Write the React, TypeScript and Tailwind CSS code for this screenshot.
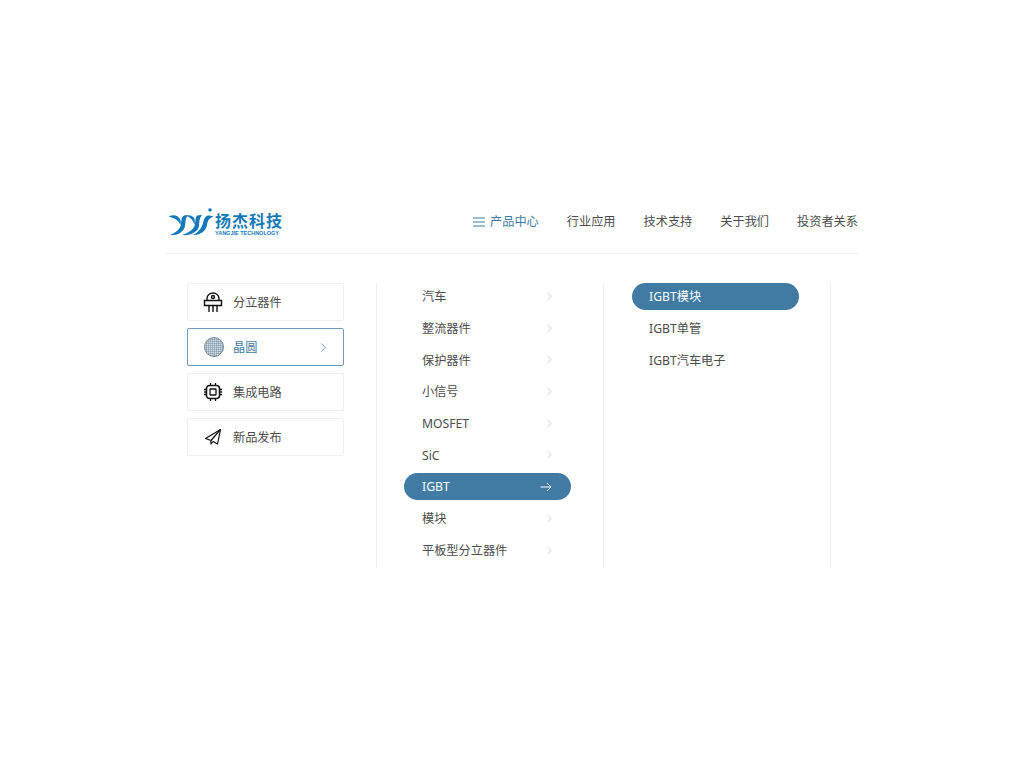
import { ChevronRight } from "lucide-react";

const fontCls = "font-['Noto_Sans','Noto_Sans_CJK_SC',sans-serif]";

const navItems = ["行业应用", "技术支持", "关于我们", "投资者关系"];
const categories = ["汽车", "整流器件", "保护器件", "小信号", "MOSFET", "SiC", "IGBT", "模块", "平板型分立器件"];
const subItems = ["IGBT模块", "IGBT单管", "IGBT汽车电子"];

const Logo = () => (
  <div className="flex items-end">
    <svg width="46" height="30" viewBox="0 0 46 30" className="shrink-0" fill="#1479b8">
      <path d="M0.500 9.500 C5 7 10 8 12 12 C13 14 13 16 12.500 18 C11 14 7 11 0.500 9.500 Z" />
      <path d="M16 8.500 C13.500 10 13.500 13 13 17 C12.500 22 8 25.500 2 28 C9 29 16 25 17 19 C17.800 14 17.500 11 20 8 C18.500 7.800 17 8 16 8.500 Z" />
      <path d="M18 8.800 C21 7.500 25 8.500 26.500 12 C27 14 27 16 26.500 18 C25.500 14 23 10.500 18 8.800 Z" />
      <path d="M29 8.500 C27.500 10 27.500 13 27 17 C26.500 22 21 25.500 14 28 C22 29 30 25 31 19 C31.500 14 31.500 11 34 8 C32.500 7.800 30.500 8 29 8.500 Z" />
      <path d="M45.500 9.500 C40 7 36.500 9 35.500 14 C34.500 20 31 25 25 28 C32 28.500 38 24 39 18 C39.600 14 41 11 45.500 9.500 Z" />
      <circle cx="42" cy="3" r="1.800" />
    </svg>
    <div className="ml-[1px] flex flex-col items-start">
      <span className="pt-[1px] text-[16px] leading-[18px] font-bold tracking-[1px] text-[#1479b8]">扬杰科技</span>
      <span className="whitespace-nowrap font-['Liberation_Sans',sans-serif] text-[5.500px] leading-[7px] font-bold text-[#1479b8]">YANGJIE TECHNOLOGY</span>
    </div>
  </div>
);

const DiodeIcon = () => (
  <svg width="20" height="20" viewBox="0 0 20 20" fill="none" stroke="#111" strokeWidth="1.400">
    <path d="M4 8.500 V6.500 C4 3 7 1 10 1 C13 1 16 3 16 6.500 V8.500" />
    <circle cx="10" cy="5" r="1.500" />
    <path d="M1.500 8.500 H18.500 V13.500 H1.500 Z" />
    <path d="M6 13.500 V20 M10 13.500 V20 M14 13.500 V20" />
  </svg>
);

const WaferIcon = () => (
  <svg width="20" height="20" viewBox="0 0 20 20" className="translate-x-[1px]">
    <defs>
      <pattern id="wafer-grid" width="2" height="2" patternUnits="userSpaceOnUse">
        <rect width="2" height="2" fill="#d5dee6" />
        <path d="M0 0 H2 M0 0 V2" stroke="#4f6e88" strokeWidth="0.700" />
      </pattern>
    </defs>
    <circle cx="10" cy="10" r="9.500" fill="url(#wafer-grid)" stroke="#5b6f82" strokeWidth="0.800" />
  </svg>
);

const ChipIcon = () => (
  <svg width="20" height="20" viewBox="0 0 20 20" fill="none" stroke="#111" strokeWidth="1.300">
    <rect x="3.500" y="3.500" width="13" height="13" rx="3" strokeWidth="1.500" />
    <rect x="7" y="7" width="6" height="6" rx="0.500" />
    <path d="M7.500 1 V3.500 M12.500 1 V3.500 M7.500 16.500 V19 M12.500 16.500 V19 M1 7.500 H3.500 M1 10 H3.500 M1 12.500 H3.500 M16.500 7.500 H19 M16.500 10 H19 M16.500 12.500 H19" />
  </svg>
);

const PlaneIcon = () => (
  <svg width="18" height="18" viewBox="0 0 18 18" fill="none" stroke="#111" strokeWidth="1.200" strokeLinejoin="round">
    <path d="M16.500 1.500 L1.500 10.500 L7 12.500 V16 L9 13.500 L13.500 16 Z" />
    <path d="M7 12.500 L16.500 1.500" />
  </svg>
);

const SideCard = ({ icon, label, active }: { icon: React.ReactNode; label: string; active?: boolean }) => (
  <div
    className={`flex h-[38px] items-center rounded-[2px] border pl-[15px] pr-[12px] ${
      active ? "border-[#6f9abb] text-[#417aa3]" : "border-[#efefef] text-[#4d4d4d]"
    }`}
  >
    <span className="flex w-[20px] justify-center">{icon}</span>
    <span className="ml-[10px] flex-1 pt-[3px] text-[12.200px]">{label}</span>
    {active && <ChevronRight size={15} strokeWidth={1.200} color="#417aa3" />}
  </div>
);

const ArrowGlyph = () => (
  <svg width="12" height="10" viewBox="0 0 12 10" fill="none" stroke="#fff" strokeWidth="1" className="mr-[4px]">
    <path d="M0.500 5 H10.500 M7 1 L11 5 L7 9" />
  </svg>
);

const CategoryRow = ({ label, active }: { label: string; active?: boolean }) => (
  <div
    className={`flex h-[27px] items-center justify-between rounded-full pl-[18px] pr-[15px] text-[12.200px] ${
      active ? "bg-[#417aa3] text-white" : "text-[#4d4d4d]"
    }`}
  >
    <span className="pt-[2px]">{label}</span>
    {active ? <ArrowGlyph /> : <ChevronRight size={13} strokeWidth={1} color="#aaa" />}
  </div>
);

const App = () => {
  return (
    <div className={`min-h-[768px] bg-white pt-[190px] ${fontCls}`}>
      <div className="mx-auto w-[694px]">
        <header className="flex h-[64px] items-center justify-between border-b border-[#eeeeee] pl-[3px] pr-[1px]">
          <Logo />
          <nav className="flex items-center gap-[28px] pt-[2px] text-[12.200px] text-[#4d4d4d]">
            <div className="flex items-center text-[#417aa3]">
              <svg width="12" height="10" viewBox="0 0 12 10" stroke="#417aa3" strokeWidth="1.200" className="mr-[4px] -translate-x-[1px]">
                <path d="M0 1 H12 M0 5 H12 M0 9 H12" />
              </svg>
              产品中心
            </div>
            {navItems.map((item) => (
              <span key={item}>{item}</span>
            ))}
          </nav>
        </header>
        <main className="flex pt-[29px]">
          <div className="flex w-[211px] flex-col gap-[7px] pl-[22px] pr-[32px]">
            <SideCard icon={<DiodeIcon />} label="分立器件" />
            <SideCard icon={<WaferIcon />} label="晶圆" active />
            <SideCard icon={<ChipIcon />} label="集成电路" />
            <SideCard icon={<PlaneIcon />} label="新品发布" />
          </div>
          <div className="flex h-[285px] w-[227px] flex-col gap-[4.700px] border-l border-[#eeeeee] pl-[27px] pr-[32px]">
            {categories.map((item) => (
              <CategoryRow key={item} label={item} active={item === "IGBT"} />
            ))}
          </div>
          <div className="flex h-[285px] w-[228px] flex-col gap-[4.700px] border-x border-[#eeeeee] pl-[28px] pr-[31px]">
            {subItems.map((item, i) => (
              <div
                key={item}
                className={`flex h-[27px] items-center rounded-full pl-[17px] pt-[2px] text-[12.200px] ${
                  i === 0 ? "bg-[#417aa3] text-white" : "text-[#4d4d4d]"
                }`}
              >
                {item}
              </div>
            ))}
          </div>
        </main>
      </div>
    </div>
  );
};

export default App;
